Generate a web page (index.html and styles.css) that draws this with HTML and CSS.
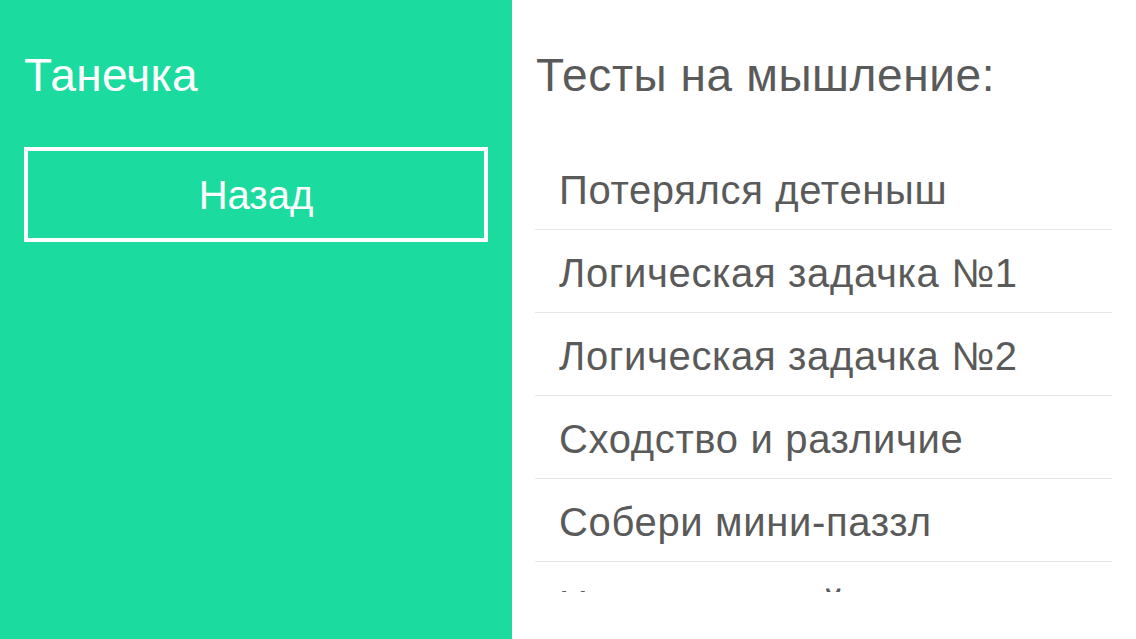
FILE: index.html
```html
<!DOCTYPE html>
<html lang="ru">
<head>
<meta charset="utf-8">
<title>Тесты на мышление</title>
<link rel="stylesheet" href="styles.css">
</head>
<body>
<div class="app">
  <aside class="sidebar">
    <h1 class="user-name">Танечка</h1>
    <button class="back-btn" type="button">Назад</button>
  </aside>
  <main class="content">
    <h2 class="section-title">Тесты на мышление:</h2>
    <ul class="test-list">
      <li class="test-item">Потерялся детеныш</li>
      <li class="test-item">Логическая задачка №1</li>
      <li class="test-item">Логическая задачка №2</li>
      <li class="test-item">Сходство и различие</li>
      <li class="test-item">Собери мини-паззл</li>
      <li class="test-item">Неправильный ответ</li>
    </ul>
  </main>
</div>
</body>
</html>
```

FILE: styles.css
```css
html, body {
  margin: 0;
  padding: 0;
  height: 100%;
}
body {
  font-family: "Liberation Sans", Arial, sans-serif;
  background: #ffffff;
  overflow: hidden;
}
.app {
  display: flex;
  width: 1136px;
  height: 639px;
}
.sidebar {
  width: 512px;
  flex: none;
  background: #1bdb9f;
  padding: 52px 24px 0 24px;
  box-sizing: border-box;
  display: flex;
  flex-direction: column;
}
.user-name {
  margin: 0;
  font-size: 46px;
  line-height: 46px;
  font-weight: normal;
  letter-spacing: 0.3px;
  color: #ffffff;
}
.back-btn {
  margin-top: 49px;
  width: 464px;
  height: 95px;
  box-sizing: border-box;
  border: 4px solid #ffffff;
  background: transparent;
  color: #ffffff;
  font-family: "Liberation Sans", Arial, sans-serif;
  font-size: 40px;
  line-height: 40px;
  padding: 0;
  display: flex;
  align-items: center;
  justify-content: center;
}
.content {
  flex: 1;
  padding: 52px 24px 0 23px;
  box-sizing: border-box;
  display: flex;
  flex-direction: column;
}
.section-title {
  margin: 0 0 0 1px;
  font-size: 46px;
  line-height: 46px;
  font-weight: normal;
  letter-spacing: 0.6px;
  color: #5a5a5a;
}
.test-list {
  list-style: none;
  margin: 49px 0 0 0;
  padding: 0;
  height: 445px;
  overflow: hidden;
}
.test-item {
  padding: 23px 0 19px 24px;
  font-size: 40px;
  line-height: 40px;
  letter-spacing: 0.65px;
  color: #5a5a5a;
  border-bottom: 1px solid #e6e6e6;
  white-space: nowrap;
}
```
